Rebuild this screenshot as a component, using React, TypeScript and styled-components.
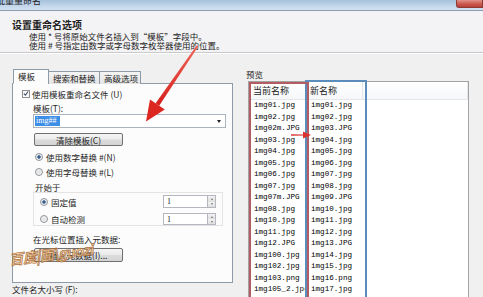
import React from 'react';
import styled, { createGlobalStyle } from 'styled-components';

const Global = createGlobalStyle`
  html, body { margin: 0; padding: 0; background: #f0f0f0; }
  * { box-sizing: border-box; }
`;

const Window = styled.div`
  position: relative;
  width: 483px;
  height: 297px;
  overflow: hidden;
  background: #f0f0f0;
  display: flex;
  flex-direction: column;
  color: #1c1c1c;
  font-family: "Noto Sans CJK SC", "Noto Sans", sans-serif;
  font-size: 8.5px;
`;

const TitleBar = styled.div`
  flex: none;
  height: 11px;
  display: flex;
  align-items: flex-end;
  overflow: hidden;
  background: linear-gradient(180deg, #a6c0dc 0%, #c3d7eb 60%, #d3e2f1 100%);
  border-bottom: 1px solid #8b9bb0;
`;

const TitleText = styled.div`
  font-size: 9px;
  line-height: 9px;
  margin-left: -4px;
  margin-bottom: 5px;
  color: #222;
`;

const CloseButton = styled.div`
  margin-left: auto;
  align-self: flex-start;
  width: 27px;
  height: 8px;
  border-radius: 0 0 0 3px;
  background: linear-gradient(180deg, #e0928a 0%, #c9554b 60%, #b8423a 100%);
  border: 1px solid #8e3a33;
  border-top: none;
`;

const Header = styled.div`
  flex: none;
  height: 42px;
  padding: 8px 0 0 12px;
  background: #f3f2f4;
  border-bottom: 1px solid #c9c9cc;
  box-shadow: 0 1px 0 #ffffff;
`;

const HeaderTitle = styled.div`
  font-size: 10px;
  font-weight: bold;
  line-height: 11px;
  margin-bottom: 1.5px;
`;

const HeaderLine = styled.div`
  margin-left: 17px;
  line-height: 9px;
  white-space: nowrap;
`;

const Body = styled.div`
  flex: 1;
  display: flex;
  padding: 16px 0 0 12px;
`;

const LeftCol = styled.div`
  width: 221px;
  display: flex;
  flex-direction: column;
`;

const Tabs = styled.div`
  position: relative;
  z-index: 1;
  display: flex;
  align-items: flex-end;
  height: 15px;
`;

const Tab = styled.div<{ $active?: boolean; $w: number }>`
  width: ${(p) => p.$w}px;
  height: ${(p) => (p.$active ? 15 : 13)}px;
  margin-left: ${(p) => (p.$active ? 1 : -1)}px;
  padding-left: 4px;
  line-height: ${(p) => (p.$active ? 13 : 12)}px;
  border: 1px solid #8e9aa6;
  border-bottom: ${(p) => (p.$active ? '1px solid #fcfcfc' : 'none')};
  background: ${(p) => (p.$active ? '#fcfcfc' : 'linear-gradient(180deg, #f4f4f4 0%, #e4e4e4 100%)')};
  white-space: nowrap;
  &:first-child { margin-left: 1px; }
`;

const Panel = styled.div`
  margin-top: -1px;
  height: 200px;
  border: 1px solid #8e9aa6;
  background: #fcfcfc;
  display: flex;
  flex-direction: column;
  padding-top: 4px;
`;

const Row = styled.div<{ $mt?: number; $ml?: number; $h?: number }>`
  display: flex;
  align-items: center;
  margin-top: ${(p) => p.$mt ?? 0}px;
  margin-left: ${(p) => p.$ml ?? 0}px;
  height: ${(p) => p.$h ?? 11}px;
  white-space: nowrap;
`;

const CheckBox = styled.div`
  width: 8px;
  height: 8px;
  border: 1px solid #8f8f8f;
  background: linear-gradient(180deg, #f4f4f4, #ffffff);
  margin-right: 2px;
  display: flex;
  align-items: center;
  justify-content: center;
`;

const Radio = styled.div<{ $on?: boolean }>`
  width: 8px;
  height: 8px;
  border-radius: 50%;
  border: 1px solid #8f949a;
  background: ${(p) =>
    p.$on
      ? 'radial-gradient(circle, #2f4f78 0%, #4a6e9a 35%, #e9edf2 45%, #f6f6f6 100%)'
      : 'radial-gradient(circle, #e2e2e2 0%, #f7f7f7 100%)'};
  margin-right: 3px;
  flex: none;
`;

const Combo = styled.div`
  margin-top: 1px;
  margin-left: 20px;
  width: 193px;
  height: 14px;
  border: 1px solid #abb3bf;
  background: #ffffff;
  display: flex;
  align-items: center;
  padding: 0 4px 0 1px;
`;

const Selected = styled.span`
  background: #3d8ee6;
  color: #ffffff;
  font-family: "Liberation Serif", serif;
  font-size: 8px;
  line-height: 10px;
  padding: 0 4px 0 1px;
`;

const ComboArrow = styled.div`
  margin-left: auto;
  width: 0;
  height: 0;
  border-left: 2.5px solid transparent;
  border-right: 2.5px solid transparent;
  border-top: 3px solid #222;
`;

const Button = styled.div<{ $mt: number; $h: number }>`
  margin-top: ${(p) => p.$mt}px;
  margin-left: 21px;
  width: 89px;
  height: ${(p) => p.$h}px;
  border: 1px solid #707070;
  border-radius: 2px;
  background: linear-gradient(180deg, #f4f4f4 0%, #ebebeb 48%, #dcdcdc 52%, #d4d4d4 100%);
  display: flex;
  align-items: center;
  justify-content: center;
  white-space: nowrap;
`;

const Group = styled.div`
  margin-left: 20px;
  width: 190px;
  height: 34px;
  border: 1px solid #e4e4e4;
  padding: 2px 6px 0 6px;
  display: flex;
  flex-direction: column;
`;

const GroupRow = styled.div<{ $mt?: number; $h: number }>`
  display: flex;
  align-items: center;
  margin-top: ${(p) => p.$mt ?? 0}px;
  height: ${(p) => p.$h}px;
`;

const GroupLabel = styled.div`
  flex: 1;
  display: flex;
  align-items: center;
  white-space: nowrap;
`;

const SpinInput = styled.div`
  width: 44px;
  height: 100%;
  border: 1px solid #b4b8be;
  border-right: none;
  background: #ffffff;
  font-family: "Liberation Serif", serif;
  font-size: 8px;
  padding-left: 3px;
  display: flex;
  align-items: center;
`;

const Spinner = styled.div`
  width: 9px;
  height: 100%;
  border: 1px solid #b4b8be;
  display: flex;
  flex-direction: column;
`;

const SpinHalf = styled.div<{ $up?: boolean }>`
  flex: 1;
  background: linear-gradient(180deg, #f3f3f3, #dedede);
  display: flex;
  align-items: center;
  justify-content: center;
  &::after {
    content: '';
    width: 0;
    height: 0;
    border-left: 1.5px solid transparent;
    border-right: 1.5px solid transparent;
    ${(p) => (p.$up ? 'border-bottom: 2px solid #777;' : 'border-top: 2px solid #777;')}
  }
`;

const CaseLabel = styled.div`
  margin-top: 1px;
  line-height: 11px;
  white-space: nowrap;
`;

const RightCol = styled.div`
  margin-left: 13px;
  width: 223px;
  display: flex;
  flex-direction: column;
`;

const PreviewLabel = styled.div`
  line-height: 11px;
`;

const ListBox = styled.div`
  position: relative;
  margin: 1px 0 0 2px;
  flex: 1;
  background: #ffffff;
  border: 1px solid #a3a3a3;
  border-bottom: none;
`;

const ListHead = styled.div`
  display: flex;
  height: 18px;
  background: linear-gradient(180deg, #ffffff 0%, #f6f7f9 100%);
  border-bottom: 1px solid #e3e6ea;
`;

const HeadCell = styled.div<{ $w?: number }>`
  width: ${(p) => (p.$w ? `${p.$w}px` : 'auto')};
  flex: ${(p) => (p.$w ? 'none' : 1)};
  padding-left: 4px;
  font-size: 9px;
  display: flex;
  align-items: center;
  border-right: 1px solid #e3e6ea;
`;

const ListRow = styled.div`
  display: flex;
  height: 11.5px;
  font-family: "Liberation Mono", "DejaVu Sans Mono", monospace;
  font-size: 7.6px;
  line-height: 11.5px;
  color: #000;
`;

const Cell = styled.div`
  width: 57px;
  padding-left: 5px;
  white-space: nowrap;
`;

const Mark = styled.div<{ $c: string; $l: number; $t: number; $w: number }>`
  position: absolute;
  left: ${(p) => p.$l}px;
  top: ${(p) => p.$t}px;
  width: ${(p) => p.$w}px;
  height: 240px;
  border: 2px solid ${(p) => p.$c};
  pointer-events: none;
`;

const SmallArrow = styled.svg`
  position: absolute;
  left: 41px;
  top: 49px;
`;

const Overlay = styled.svg`
  position: absolute;
  left: 0;
  top: 0;
  pointer-events: none;
  z-index: 5;
`;

const Watermark = styled.div`
  position: absolute;
  left: 9px;
  top: 244px;
  transform: rotate(-7deg);
  font-style: italic;
  font-weight: bold;
  font-size: 14px;
  font-family: "Noto Sans CJK SC", sans-serif;
  color: rgba(245, 200, 140, 0.75);
  -webkit-text-stroke: 0.7px rgba(160, 95, 45, 0.9);
  white-space: nowrap;
  letter-spacing: -0.5px;
  z-index: 4;
  pointer-events: none;
`;

const current = [
  'img01.jpg', 'img02.jpg', 'img02m.JPG', 'img03.jpg', 'img04.jpg', 'img05.jpg',
  'img06.jpg', 'img07.jpg', 'img07m.JPG', 'img08.jpg', 'img10.jpg', 'img11.jpg',
  'img12.JPG', 'img100.jpg', 'img102.jpg', 'img103.png', 'img105_2.jpg',
];
const renamed = [
  'img01.jpg', 'img02.jpg', 'img03.JPG', 'img04.jpg', 'img05.jpg', 'img06.jpg',
  'img07.jpg', 'img08.jpg', 'img09.JPG', 'img10.jpg', 'img11.jpg', 'img12.jpg',
  'img13.JPG', 'img14.jpg', 'img15.jpg', 'img16.png', 'img17.jpg',
];

const Spin = () => (
  <>
    <SpinInput>1</SpinInput>
    <Spinner>
      <SpinHalf $up />
      <SpinHalf />
    </Spinner>
  </>
);

export default function App() {
  return (
    <Window>
      <Global />
      <TitleBar>
        <TitleText>批量重命名</TitleText>
        <CloseButton />
      </TitleBar>
      <Header>
        <HeaderTitle>设置重命名选项</HeaderTitle>
        <HeaderLine>使用 * 号将原始文件名插入到“模板”字段中。</HeaderLine>
        <HeaderLine>使用 # 号指定由数字或字母数字枚举器使用的位置。</HeaderLine>
      </Header>
      <Body>
        <LeftCol>
          <Tabs>
            <Tab $active $w={36}>模板</Tab>
            <Tab $w={52}>搜索和替换</Tab>
            <Tab $w={42}>高级选项</Tab>
          </Tabs>
          <Panel>
            <Row $ml={9} $h={11}>
              <CheckBox>
                <svg width="7" height="7" viewBox="0 0 7 7">
                  <path d="M1 3.6 L2.8 5.4 L6 1.2" stroke="#3b4f6b" strokeWidth="1.2" fill="none" />
                </svg>
              </CheckBox>
              使用模板重命名文件 (U)
            </Row>
            <Row $mt={3} $ml={20}>模板(T):</Row>
            <Combo>
              <Selected>img##</Selected>
              <ComboArrow />
            </Combo>
            <Button $mt={5} $h={13}>清除模板(C)</Button>
            <Row $mt={5} $ml={22}>
              <Radio $on />
              使用数字替换 #(N)
            </Row>
            <Row $mt={4} $ml={22}>
              <Radio />
              使用字母替换 #(L)
            </Row>
            <Row $mt={4} $ml={22}>开始于</Row>
            <Group>
              <GroupRow $h={13}>
                <GroupLabel>
                  <Radio $on />
                  固定值
                </GroupLabel>
                <Spin />
              </GroupRow>
              <GroupRow $mt={5} $h={12}>
                <GroupLabel>
                  <Radio />
                  自动检测
                </GroupLabel>
                <Spin />
              </GroupRow>
            </Group>
            <Row $mt={7} $ml={20}>在光标位置插入元数据:</Row>
            <Button $mt={4} $h={14}>插入元数据(I)...</Button>
          </Panel>
          <CaseLabel>文件名大小写 (F):</CaseLabel>
        </LeftCol>
        <RightCol>
          <PreviewLabel>预览</PreviewLabel>
          <ListBox>
            <ListHead>
              <HeadCell $w={57}>当前名称</HeadCell>
              <HeadCell $w={57}>新名称</HeadCell>
              <HeadCell />
            </ListHead>
            {current.map((c, i) => (
              <ListRow key={i}>
                <Cell>{c}</Cell>
                <Cell>{renamed[i]}</Cell>
              </ListRow>
            ))}
            <Mark $c="#5a8cbc" $l={56} $t={-2} $w={62} />
            <Mark $c="#b45c64" $l={0} $t={0} $w={60} />
            <SmallArrow width="24" height="8" viewBox="0 0 24 8">
              <path d="M1 3.2 L14 3.4 L14 4.6 L1 4.8 Z" fill="#d8332e" />
              <path d="M13 0.6 L21 4 L13 7.4 Z" fill="#d8332e" />
            </SmallArrow>
          </ListBox>
        </RightCol>
      </Body>
      <Overlay width="483" height="297" viewBox="0 0 483 297">
        <defs>
          <linearGradient id="ar" x1="0" y1="0" x2="0" y2="1">
            <stop offset="0" stopColor="#f0645a" />
            <stop offset="1" stopColor="#d5201c" />
          </linearGradient>
        </defs>
        <path d="M196.6 45.4 L198.2 46.4 L159.2 105.7 L155.6 103.3 Z" fill="url(#ar)" />
        <path d="M146 121.5 L150 99.4 L164.8 109.6 Z" fill="#dc2620" />
      </Overlay>
      <Watermark>百度|面\guozi</Watermark>
    </Window>
  );
}
